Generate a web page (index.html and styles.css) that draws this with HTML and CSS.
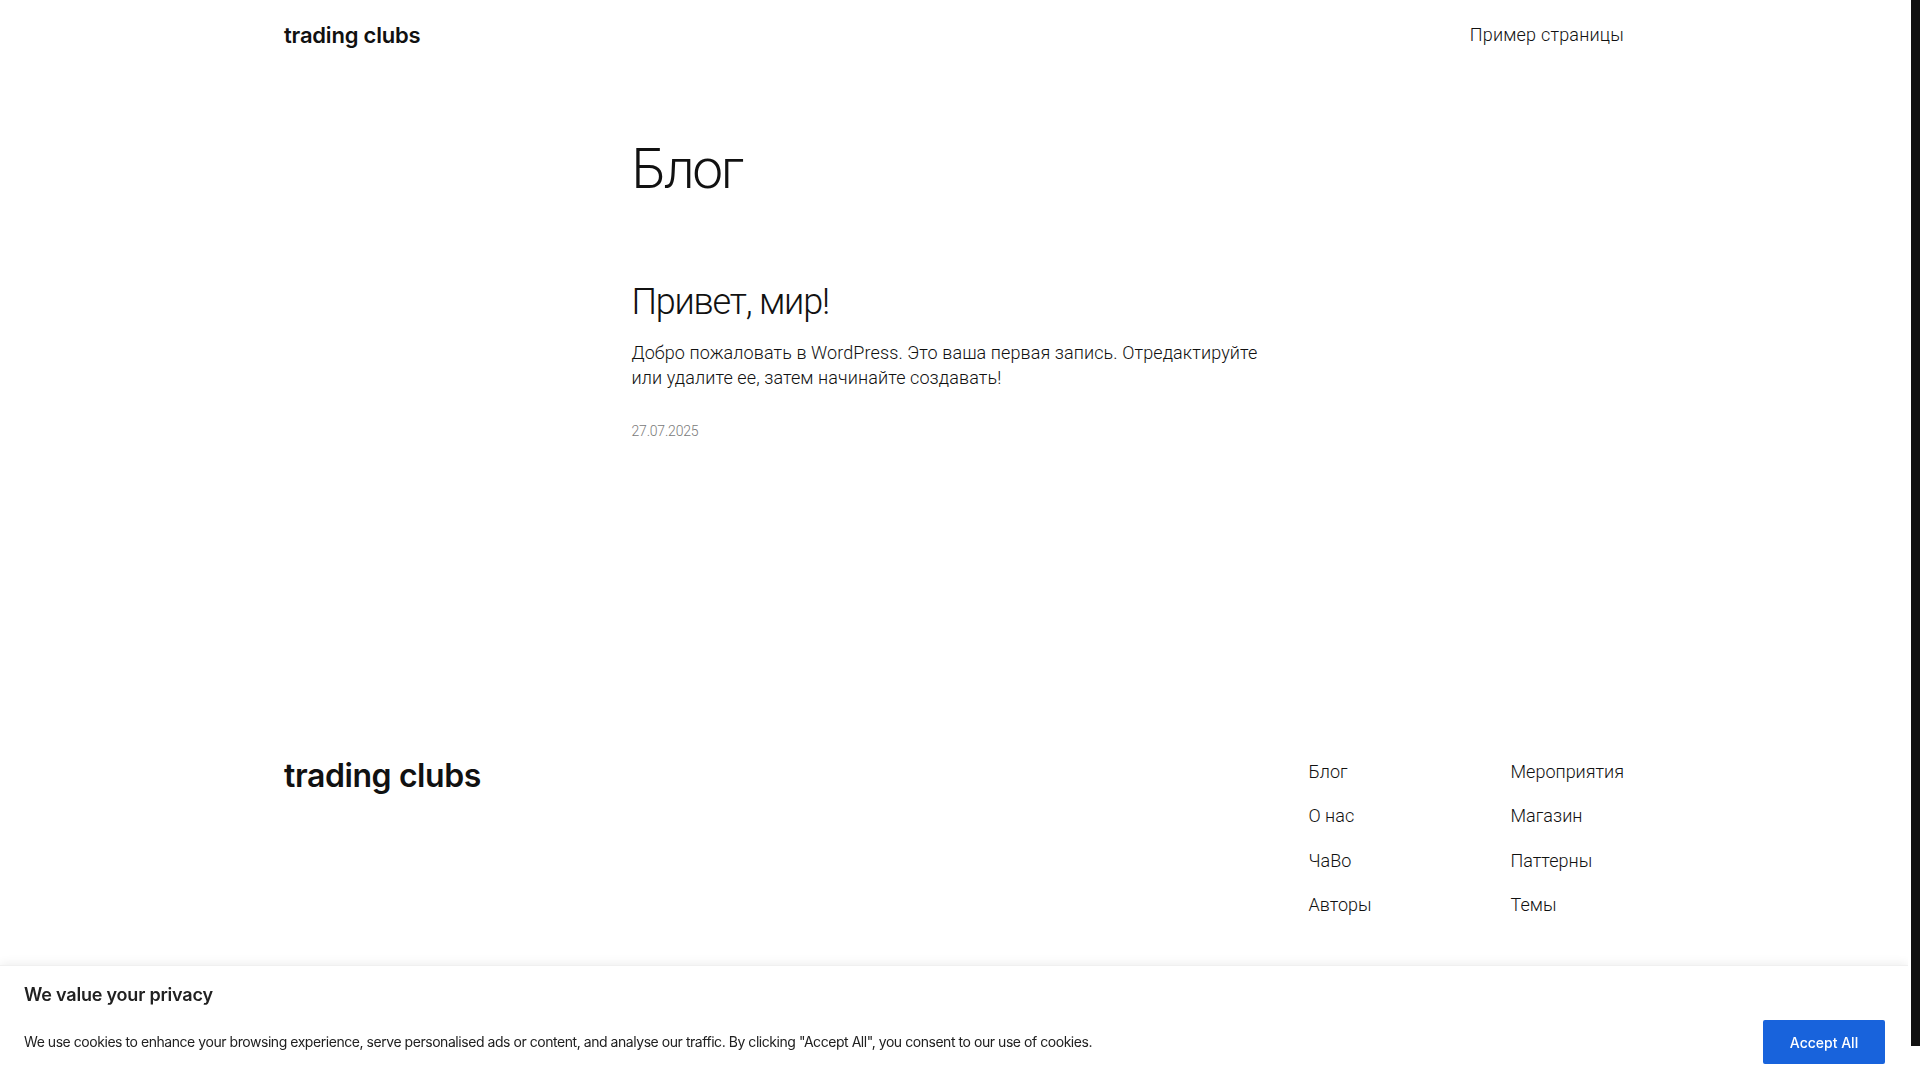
FILE: index.html
```html
<!DOCTYPE html>
<html lang="ru">
<head>
    <meta charset="UTF-8">
    <meta name="viewport" content="width=device-width, initial-scale=1.0">
    <title>Блог – trading clubs</title>
    <link rel="stylesheet" href="styles.css">
</head>
<body>
    <div class="page">
        <header class="site-header">
            <div class="wrap header-inner">
                <a href="#" class="site-title">trading clubs</a>
                <nav class="main-nav">
                    <a href="#">Пример страницы</a>
                </nav>
            </div>
        </header>

        <main class="site-main">
            <div class="content">
                <h1 class="page-title">Блог</h1>

                <article class="post">
                    <h2 class="post-title"><a href="#">Привет, мир!</a></h2>
                    <p class="post-excerpt">Добро пожаловать в WordPress. Это ваша первая запись. Отредактируйте или удалите ее, затем начинайте создавать!</p>
                    <time class="post-date" datetime="2025-07-27">27.07.2025</time>
                </article>
            </div>
        </main>

        <footer class="site-footer">
            <div class="wrap footer-inner">
                <a href="#" class="footer-title">trading clubs</a>
                <div class="footer-nav">
                    <nav class="footer-col">
                        <a href="#">Блог</a>
                        <a href="#">О нас</a>
                        <a href="#">ЧаВо</a>
                        <a href="#">Авторы</a>
                    </nav>
                    <nav class="footer-col">
                        <a href="#">Мероприятия</a>
                        <a href="#">Магазин</a>
                        <a href="#">Паттерны</a>
                        <a href="#">Темы</a>
                    </nav>
                </div>
            </div>
        </footer>
    </div>

    <div class="cookie-bar">
        <p class="cookie-title">We value your privacy</p>
        <div class="cookie-row">
            <p class="cookie-text">We use cookies to enhance your browsing experience, serve personalised ads or content, and analyse our traffic. By clicking "Accept All", you consent to our use of cookies.</p>
            <button type="button" class="cookie-accept">Accept All</button>
        </div>
    </div>

    <!-- page scrollbar, as the browser shows it -->
    <div class="scrollbar" aria-hidden="true">
        <div class="scrollbar-thumb"></div>
    </div>
</body>
</html>
```

FILE: styles.css
```css
body {
    margin: 0;
    background: #ffffff;
    color: #111111;
    font-family: Roboto, "Noto Sans", sans-serif;
    font-weight: 300;
    font-size: 18px;
    line-height: 1.4;
}

a {
    color: inherit;
    text-decoration: none;
}

.page {
    margin-right: 12px;
}

.wrap {
    max-width: 1340px;
    margin: 0 auto;
}

/* header */
.site-header {
    padding-top: 21px;
}

.header-inner {
    display: flex;
    justify-content: space-between;
    align-items: center;
    height: 28px;
}

.site-title {
    font-family: Inter, "Noto Sans", sans-serif;
    font-size: 22px;
    font-weight: 600;
    letter-spacing: -0.2px;
    line-height: 28px;
}

.main-nav a {
    font-size: 18px;
    letter-spacing: 0.2px;
}

/* main */
.content {
    max-width: 645px;
    margin: 0 auto;
}

.page-title {
    margin: 87px 0 0;
    font-size: 55px;
    font-weight: 300;
    line-height: 66px;
    letter-spacing: -2.4px;
}

.post-title {
    margin: 79px 0 0;
    font-size: 36px;
    font-weight: 300;
    line-height: 1.2;
    letter-spacing: -1.2px;
}

.post-excerpt {
    margin: 16px 0 0;
    letter-spacing: 0.1px;
}

.post-date {
    display: block;
    margin-top: 31px;
    font-size: 14px;
    color: #7a7a7a;
    letter-spacing: -0.2px;
}

/* footer */
.site-footer {
    margin-top: 318px;
    padding-bottom: 199px;
}

.footer-inner {
    display: flex;
    justify-content: space-between;
    align-items: flex-start;
}

.footer-title {
    font-family: Inter, "Noto Sans", sans-serif;
    font-size: 32px;
    font-weight: 600;
    line-height: 34px;
    letter-spacing: -0.4px;
}

.footer-nav {
    display: grid;
    grid-template-columns: 202px auto;
}

.footer-col {
    display: flex;
    flex-direction: column;
    gap: 19px;
}

.footer-col a {
    letter-spacing: 0;
}

/* cookie consent */
.cookie-bar {
    position: fixed;
    left: 0;
    right: 12px;
    bottom: 0;
    padding: 16px 23px 16px 24px;
    background: #ffffff;
    border-top: 1px solid #f0f0f0;
    box-shadow: 0 -1px 10px rgba(0, 0, 0, 0.08);
    color: #212121;
    font-family: Inter, "Noto Sans", sans-serif;
}

.cookie-title {
    margin: 0;
    font-size: 18px;
    font-weight: 600;
    line-height: 26px;
    letter-spacing: -0.2px;
}

.cookie-row {
    display: flex;
    justify-content: space-between;
    align-items: center;
    margin-top: 12px;
}

.cookie-text {
    margin: 0;
    font-size: 14px;
    font-weight: 400;
    line-height: 24px;
    letter-spacing: -0.45px;
}

.cookie-accept {
    width: 122px;
    height: 44px;
    background-color: #1863dc;
    border: 2px solid #1863dc;
    border-radius: 2px;
    color: #ffffff;
    font-family: inherit;
    font-size: 14px;
    font-weight: 500;
    cursor: pointer;
}

/* scrollbar */
.scrollbar {
    position: fixed;
    top: 0;
    right: 0;
    bottom: 0;
    width: 12px;
    background: #ffffff;
}

.scrollbar-thumb {
    height: 1046px;
    margin-left: 3px;
    background: #111111;
}
```
